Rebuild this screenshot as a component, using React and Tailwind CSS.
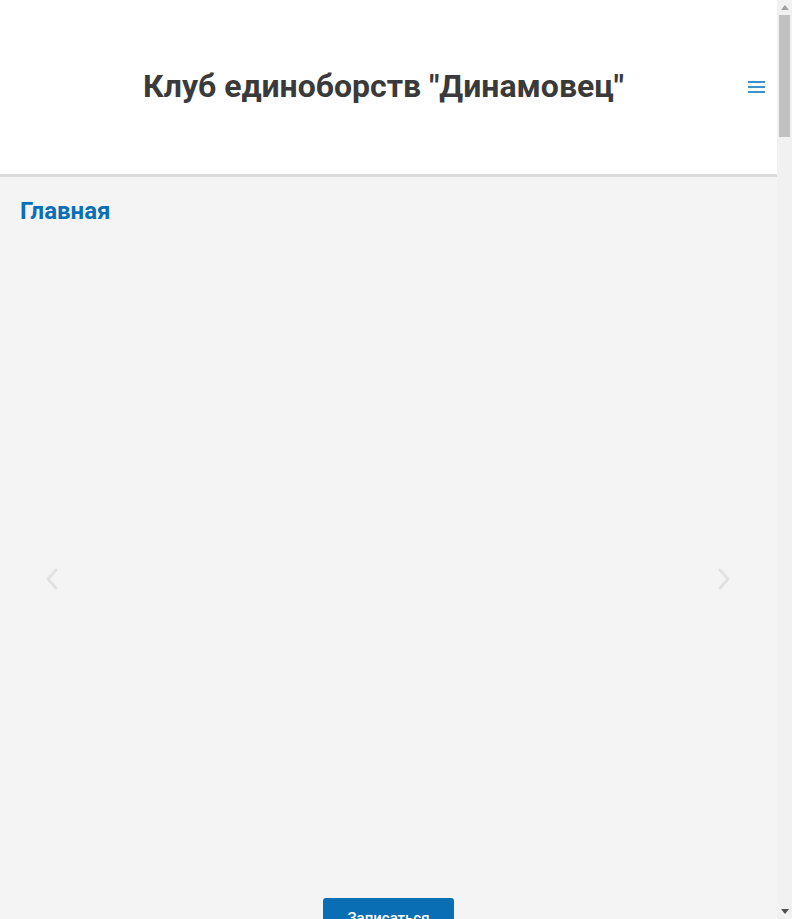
import React from 'react';

const Chevron = ({ dir }) => (
  <svg width="14" height="22" viewBox="0 0 14 22" fill="none">
    <path
      d={dir === 'left' ? 'M11 2 L3 11 L11 20' : 'M3 2 L11 11 L3 20'}
      stroke="#e2e2e2"
      strokeWidth="3"
      strokeLinecap="round"
      strokeLinejoin="round"
    />
  </svg>
);

// fake classic scrollbar (window's own scrollbar isn't drawn headless)
const ScrollBar = () => (
  <div className="w-[15px] h-[919px] bg-[#f1f1f1] flex flex-col items-center shrink-0">
    <div className="h-[15px] flex items-center justify-center">
      <svg width="8" height="5" viewBox="0 0 8 5">
        <path d="M0 5 L4 0 L8 5 Z" fill="#a3a3a3" />
      </svg>
    </div>
    <div className="w-[11px] h-[122px] bg-[#c1c1c1]" />
    <div className="flex-1" />
    <div className="h-[15px] flex items-center justify-center">
      <svg width="8" height="5" viewBox="0 0 8 5">
        <path d="M0 0 L8 0 L4 5 Z" fill="#505050" />
      </svg>
    </div>
  </div>
);

export default function App() {
  return (
    <div className="h-[919px] overflow-hidden flex font-['Roboto',sans-serif]">
      <div className="flex-1 min-h-[6700px] bg-[#f4f4f4]">
        {/* header */}
        <header className="bg-white border-b-[3px] border-[#dddddd] h-[177px] flex items-center relative">
          <h1 className="flex-1 text-center text-[32px] font-bold text-[#3a3a3a] leading-none pb-[2px] pr-[10px]">
            Клуб единоборств "Динамовец"
          </h1>
          <button className="absolute right-[12px] top-[81px] flex flex-col gap-[3px]">
            <span className="block w-[17px] h-[2px] bg-[#3f8fcc]" />
            <span className="block w-[17px] h-[2px] bg-[#3f8fcc]" />
            <span className="block w-[17px] h-[2px] bg-[#3f8fcc]" />
          </button>
        </header>

        <main className="px-[20px]">
          <h2 className="pt-[21px] text-[24px] font-bold text-[#0b6fb8] leading-[26px]">Главная</h2>

          {/* carousel */}
          <div className="relative h-[640px] mt-[16px]">
            <div className="absolute left-[25px] top-[328px]">
              <Chevron dir="left" />
            </div>
            <div className="absolute right-[26px] top-[328px]">
              <Chevron dir="right" />
            </div>
          </div>

          <div className="flex justify-center mt-[18px]">
            <button className="w-[131px] h-[40px] rounded-[3px] bg-[#0a6eb5] text-white text-[15px] font-medium">
              Записаться
            </button>
          </div>
        </main>
      </div>
      <ScrollBar />
    </div>
  );
}
